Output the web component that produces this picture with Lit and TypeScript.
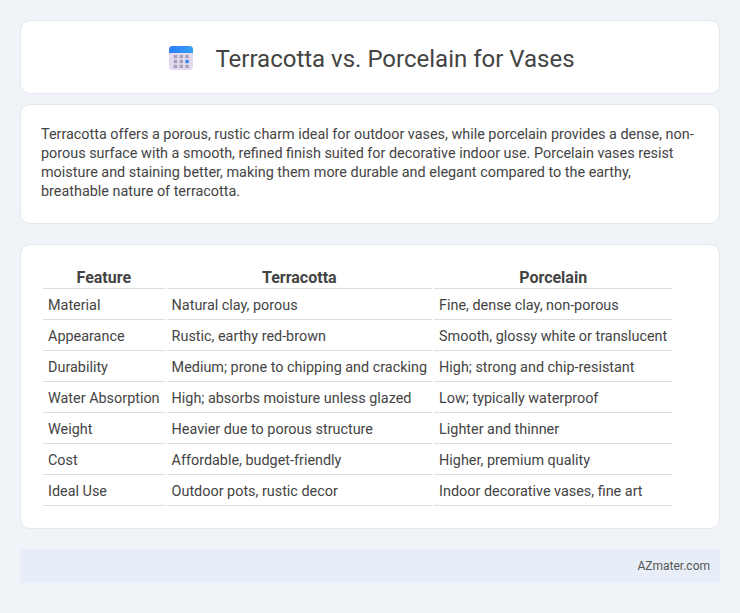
import { LitElement, html, svg, css } from "lit";
import { customElement } from "lit/decorators.js";

const rows = [
  ["Material", "Natural clay, porous", "Fine, dense clay, non-porous"],
  ["Appearance", "Rustic, earthy red-brown", "Smooth, glossy white or translucent"],
  ["Durability", "Medium; prone to chipping and cracking", "High; strong and chip-resistant"],
  ["Water Absorption", "High; absorbs moisture unless glazed", "Low; typically waterproof"],
  ["Weight", "Heavier due to porous structure", "Lighter and thinner"],
  ["Cost", "Affordable, budget-friendly", "Higher, premium quality"],
  ["Ideal Use", "Outdoor pots, rustic decor", "Indoor decorative vases, fine art"],
];

@customElement("app-root")
export class AppRoot extends LitElement {
  static styles = css`
    :host { display: block; min-height: 613px; background: #f0f4f8; font-family: Roboto, sans-serif; color: #444; box-sizing: border-box; padding: 20px; }
    .card { background: #fff; border: 1px solid #e2e8f0; border-radius: 10px; box-sizing: border-box; }
    .head { height: 74px; display: flex; align-items: center; justify-content: center; gap: 22px; margin-bottom: 10px; padding: 2px 0 0 4px; }
    .head svg { display: block; }
    h1 { margin: 0; padding-top: 2px; font-size: 24px; font-weight: 400; color: #444; line-height: 28px; }
    .intro { height: 120px; padding: 20px; margin-bottom: 20px; }
    .intro p { margin: 0; font-size: 14.4px; line-height: 19px; color: #444; }
    .tbl { height: 285px; padding: 20px 20px 0; margin-bottom: 20px; }
    table { border-collapse: separate; border-spacing: 2px; font-size: 14.4px; }
    th { font-size: 16px; font-weight: 700; padding: 1px 5px 1px; line-height: 19px; border-bottom: 1px solid #ddd; text-align: center; white-space: nowrap; color: #444; }
    td { padding: 6px 5px 4px; line-height: 18px; border-bottom: 1px solid #ddd; text-align: left; white-space: nowrap; color: #444; }
    .foot { height: 34px; background: #e8eef7; display: flex; align-items: center; justify-content: flex-end; padding: 0 10px; font-size: 12px; color: #555; }
  `;
  render() {
    return html`
      <div class="card head">
        <svg width="24" height="24" viewBox="0 0 24 24" aria-hidden="true">
          <defs>
            <linearGradient id="top" x1="0" y1="0" x2="1" y2="0"><stop offset="0" stop-color="#2b7fff"/><stop offset="1" stop-color="#38a0f5"/></linearGradient>
          </defs>
          <rect x="0" y="0" width="24" height="24" rx="3.5" fill="#e2d9ee"/>
          <path d="M0 7V3.5A3.5 3.5 0 0 1 3.5 0h17A3.5 3.5 0 0 1 24 3.5V7Z" fill="url(#top)"/>
          ${[0, 1, 2].flatMap((r) => [0, 1, 2].map((c) => svg`<rect x=${4.8 + c * 5.8} y=${9 + r * 4.9} width="3.4" height="3.2" fill=${r === 1 && c === 2 ? "#2b8cf5" : "#aa9db8"}/>`))}
        </svg>
        <h1>Terracotta vs. Porcelain for Vases</h1>
      </div>
      <div class="card intro">
        <p>Terracotta offers a porous, rustic charm ideal for outdoor vases, while porcelain provides a dense, non-porous surface with a smooth, refined finish suited for decorative indoor use. Porcelain vases resist moisture and staining better, making them more durable and elegant compared to the earthy, breathable nature of terracotta.</p>
      </div>
      <div class="card tbl">
        <table>
          <thead><tr><th>Feature</th><th>Terracotta</th><th>Porcelain</th></tr></thead>
          <tbody>${rows.map((r) => html`<tr>${r.map((c) => html`<td>${c}</td>`)}</tr>`)}</tbody>
        </table>
      </div>
      <div class="foot">AZmater.com</div>
    `;
  }
}
